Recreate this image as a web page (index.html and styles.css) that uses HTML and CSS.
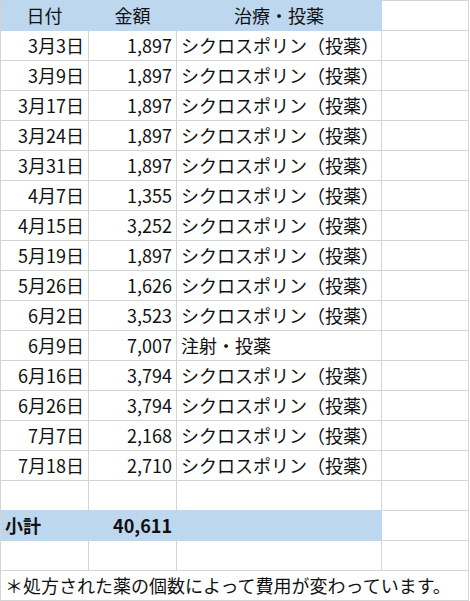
FILE: index.html
```html
<!DOCTYPE html>
<html lang="ja">
<head>
<meta charset="utf-8">
<title>費用一覧</title>
<link rel="stylesheet" href="styles.css">
</head>
<body>
<table class="sheet">
  <colgroup>
    <col class="c-date">
    <col class="c-amount">
    <col class="c-item">
    <col class="c-extra">
  </colgroup>
  <thead>
    <tr class="head">
      <th class="fill first center">日付</th>
      <th class="fill center">金額</th>
      <th class="fill center">治療・投薬</th>
      <th class="blank"></th>
    </tr>
  </thead>
  <tbody>
    <tr><td class="first num">3月3日</td><td class="num">1,897</td><td class="txt">シクロスポリン（投薬）</td><td></td></tr>
    <tr><td class="first num">3月9日</td><td class="num">1,897</td><td class="txt">シクロスポリン（投薬）</td><td></td></tr>
    <tr><td class="first num">3月17日</td><td class="num">1,897</td><td class="txt">シクロスポリン（投薬）</td><td></td></tr>
    <tr><td class="first num">3月24日</td><td class="num">1,897</td><td class="txt">シクロスポリン（投薬）</td><td></td></tr>
    <tr><td class="first num">3月31日</td><td class="num">1,897</td><td class="txt">シクロスポリン（投薬）</td><td></td></tr>
    <tr><td class="first num">4月7日</td><td class="num">1,355</td><td class="txt">シクロスポリン（投薬）</td><td></td></tr>
    <tr><td class="first num">4月15日</td><td class="num">3,252</td><td class="txt">シクロスポリン（投薬）</td><td></td></tr>
    <tr><td class="first num">5月19日</td><td class="num">1,897</td><td class="txt">シクロスポリン（投薬）</td><td></td></tr>
    <tr><td class="first num">5月26日</td><td class="num">1,626</td><td class="txt">シクロスポリン（投薬）</td><td></td></tr>
    <tr><td class="first num">6月2日</td><td class="num">3,523</td><td class="txt">シクロスポリン（投薬）</td><td></td></tr>
    <tr><td class="first num">6月9日</td><td class="num">7,007</td><td class="txt">注射・投薬</td><td></td></tr>
    <tr><td class="first num">6月16日</td><td class="num">3,794</td><td class="txt">シクロスポリン（投薬）</td><td></td></tr>
    <tr><td class="first num">6月26日</td><td class="num">3,794</td><td class="txt">シクロスポリン（投薬）</td><td></td></tr>
    <tr><td class="first num">7月7日</td><td class="num">2,168</td><td class="txt">シクロスポリン（投薬）</td><td></td></tr>
    <tr><td class="first num">7月18日</td><td class="num">2,710</td><td class="txt">シクロスポリン（投薬）</td><td></td></tr>
    <tr class="before-fill"><td class="first"></td><td></td><td></td><td></td></tr>
    <tr class="total"><td class="fill first label">小計</td><td class="fill num">40,611</td><td class="fill"></td><td></td></tr>
    <tr><td class="first"></td><td></td><td></td><td></td></tr>
    <tr><td class="first note" colspan="4">＊処方された薬の個数によって費用が変わっています。</td></tr>
  </tbody>
</table>
</body>
</html>
```

FILE: styles.css
```css
html, body {
  margin: 0;
  padding: 0;
  background: #ffffff;
}

body {
  font-family: "Noto Sans CJK JP", "Noto Sans", sans-serif;
  font-size: 18px;
  color: #111111;
}

.sheet {
  border-collapse: separate;
  border-spacing: 0;
  table-layout: fixed;
  width: 469px;
}

.c-date { width: 89px; }
.c-amount { width: 88px; }
.c-item { width: 205px; }
.c-extra { width: 87px; }

.sheet th,
.sheet td {
  height: 29px;
  padding: 0 4px;
  line-height: 29px;
  vertical-align: middle;
  white-space: nowrap;
  overflow: hidden;
  font-weight: normal;
  border-right: 1px solid #d4d4d4;
  border-bottom: 1px solid #d4d4d4;
  box-sizing: content-box;
}

.sheet .first {
  border-left: 1px solid #d4d4d4;
}

.head th {
  border-top: 1px solid #d4d4d4;
}

.sheet .fill {
  background: #bdd7ee;
  border-right-color: #bdd7ee;
  border-bottom-color: #bdd7ee;
}

.head th.fill {
  border-top-color: #bdd7ee;
}

.before-fill td:nth-child(-n+3) {
  border-bottom-color: #bdd7ee;
}

.center { text-align: center; }
.num { text-align: right; }
.txt { text-align: left; padding-left: 4px; }

.total td {
  font-weight: bold;
}

.label {
  text-align: left;
  padding-left: 4px;
}

.note {
  text-align: left;
  padding-left: 3px;
}
```
